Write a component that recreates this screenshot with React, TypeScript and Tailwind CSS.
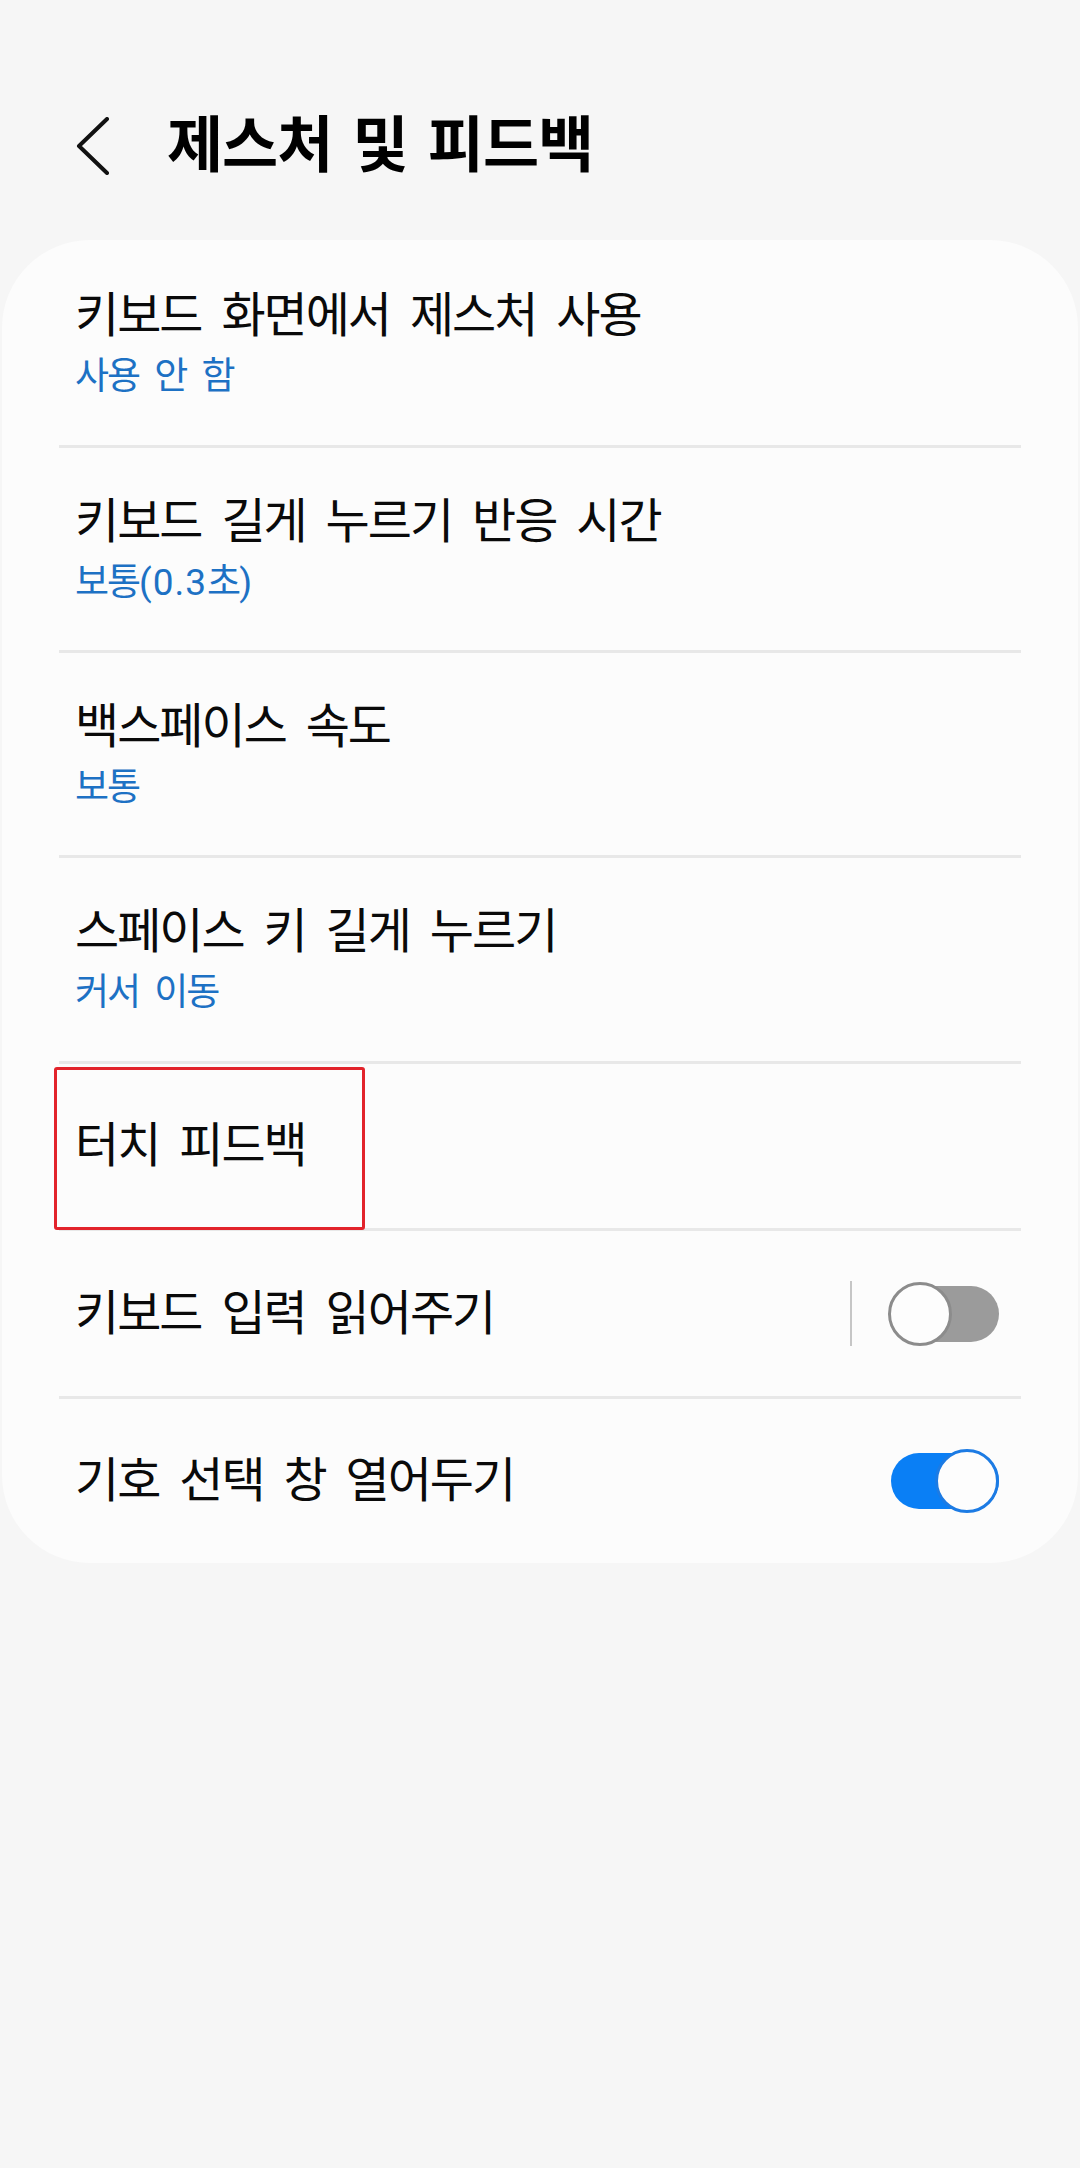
import React from "react";

const FONT = "font-['Roboto','Noto_Sans_CJK_KR',sans-serif]";

function Divider() {
  return <div className="mx-[57px] h-[3px] bg-[#e8e8e8]" />;
}

function TwoLine({ title, sub, h, pt }: { title: string; sub: React.ReactNode; h: string; pt: string }) {
  return (
    <div className={`${h} ${pt} pl-[73px]`}>
      <div className="text-[48px] leading-none tracking-[-2px] [word-spacing:10px] text-[#0a0a0a]">{title}</div>
      <div className="mt-[18px] text-[37px] leading-none tracking-[-2px] [word-spacing:8px] text-[#1d71c4]">{sub}</div>
    </div>
  );
}

function Toggle({ on }: { on: boolean }) {
  return (
    <div className="relative h-[64px] w-[111px]">
      <div
        className={`absolute left-[3px] top-[4px] h-[56px] w-[108px] rounded-full ${on ? "bg-[#0a7ff5]" : "bg-[#9b9b9b]"}`}
      />
      <div
        className={`absolute top-0 h-[64px] w-[64px] rounded-full border-[3px] bg-[#fdfdfd] ${
          on ? "right-0 border-[#1c7be4]" : "left-0 border-[#8c8c8c]"
        }`}
      />
    </div>
  );
}

const ROW_TEXT = "text-[48px] leading-none tracking-[-2px] [word-spacing:10px] text-[#0a0a0a]";

export default function App() {
  return (
    <div className={`min-h-[2168px] w-full bg-[#f6f6f6] ${FONT}`}>
      <div className="h-[240px] pt-[112px]">
        <div className="flex h-[68px] items-center">
          <svg className="ml-[76px] h-[58px] w-[34px]" viewBox="0 0 34 58" fill="none">
            <polyline
              points="31,2 3,29 31,56"
              stroke="#111111"
              strokeWidth="4"
              strokeLinecap="round"
              strokeLinejoin="round"
            />
          </svg>
          <h1 className="ml-[57px] text-[61px] font-bold leading-none tracking-[-1px] [word-spacing:6px] text-black">
            제스처 및 피드백
          </h1>
        </div>
      </div>

      <div className="mx-[2px] rounded-[88px] bg-[#fcfcfc]">
        <TwoLine title="키보드 화면에서 제스처 사용" sub="사용 안 함" h="h-[205px]" pt="pt-[52px]" />
        <Divider />
        <TwoLine
          title="키보드 길게 누르기 반응 시간"
          sub={
            <>
              보통<span className="tracking-[1px]">(0.3</span>초<span className="tracking-normal">)</span>
            </>
          }
          h="h-[202px]"
          pt="pt-[50px]"
        />
        <Divider />
        <TwoLine title="백스페이스 속도" sub="보통" h="h-[202px]" pt="pt-[50px]" />
        <Divider />
        <TwoLine title="스페이스 키 길게 누르기" sub="커서 이동" h="h-[203px]" pt="pt-[50px]" />
        <Divider />
        <div className="relative flex h-[164px] items-center pl-[73px]">
          <div className={ROW_TEXT}>터치 피드백</div>
          <div className="absolute left-[52px] top-[3px] h-[163px] w-[311px] rounded-[3px] border-[3px] border-[#e2232b]" />
        </div>
        <Divider />
        <div className="flex h-[165px] items-center pl-[73px] pr-[79px]">
          <div className={`flex-1 ${ROW_TEXT}`}>키보드 입력 읽어주기</div>
          <div className="mr-[36px] h-[65px] w-[2px] bg-[#c6c6c6]" />
          <Toggle on={false} />
        </div>
        <Divider />
        <div className="flex h-[164px] items-center pl-[73px] pr-[79px]">
          <div className={`flex-1 ${ROW_TEXT}`}>기호 선택 창 열어두기</div>
          <Toggle on={true} />
        </div>
      </div>
    </div>
  );
}
